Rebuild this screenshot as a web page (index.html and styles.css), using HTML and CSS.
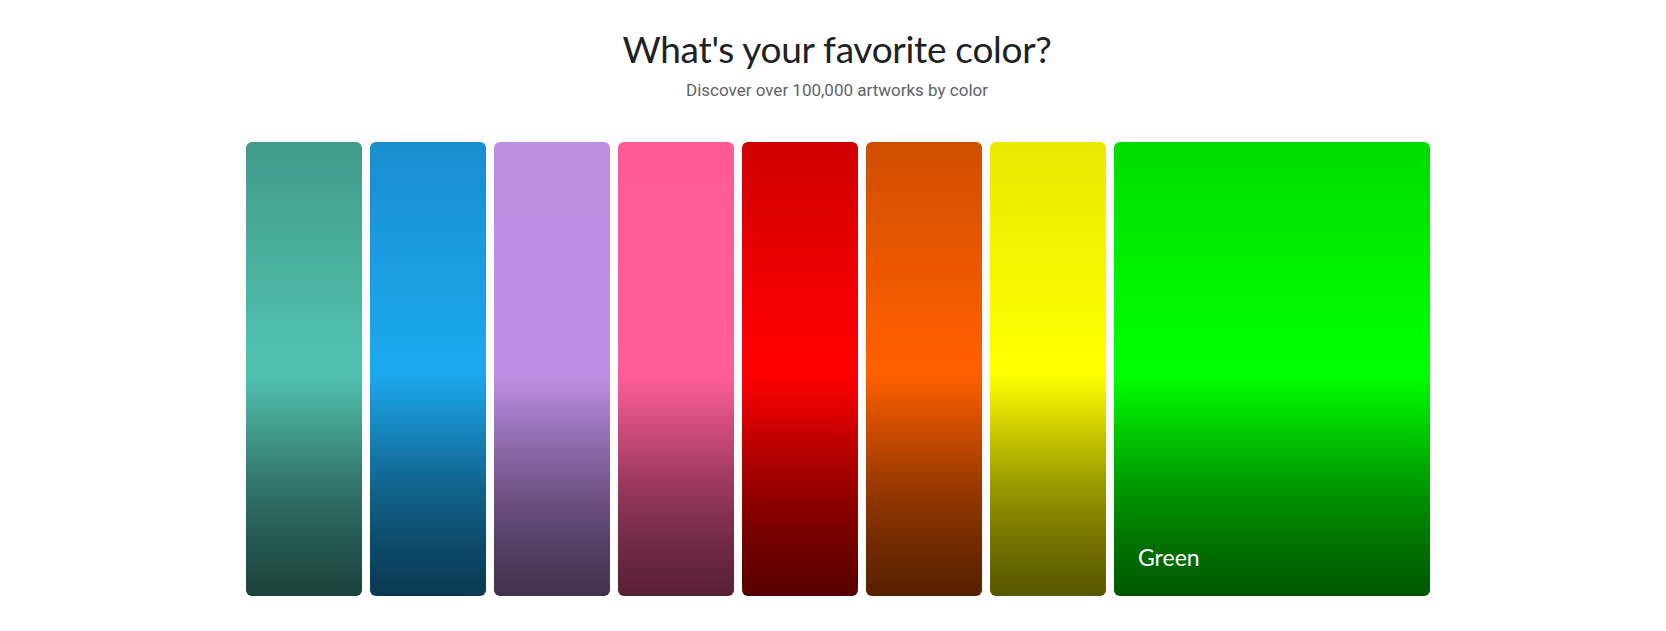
FILE: index.html
```html
<!DOCTYPE html>
<html lang="en">
<head>
<meta charset="utf-8">
<title>What's your favorite color?</title>
<link rel="stylesheet" href="styles.css">
</head>
<body>
<main class="page">
  <header class="intro">
    <h1 class="title">What's your favorite color?</h1>
    <p class="subtitle">Discover over 100,000 artworks by color</p>
  </header>
  <section class="swatches">
    <a class="swatch teal" href="#"></a>
    <a class="swatch blue" href="#"></a>
    <a class="swatch purple" href="#"></a>
    <a class="swatch pink" href="#"></a>
    <a class="swatch red" href="#"></a>
    <a class="swatch orange" href="#"></a>
    <a class="swatch yellow" href="#"></a>
    <a class="swatch green is-open" href="#"><span class="swatch-label">Green</span></a>
  </section>
</main>
</body>
</html>
```
FILE: styles.css
```css
* { box-sizing: border-box; }
html, body { margin: 0; padding: 0; background: #ffffff; }
body { font-family: Roboto, "Noto Sans", Arial, sans-serif; }

.page {
  display: flex;
  flex-direction: column;
}

.intro {
  display: flex;
  flex-direction: column;
  align-items: center;
  padding: 27px 0 0 8px;
}

.title {
  margin: 0;
  font-family: Lato, Roboto, sans-serif;
  font-weight: 400;
  font-size: 37px;
  line-height: 44px;
  color: #202124;
  letter-spacing: -0.3px;
}

.subtitle {
  margin: 7px 0 0;
  font-size: 17px;
  line-height: 24px;
  color: #5f6368;
}

.swatches {
  display: flex;
  gap: 8px;
  height: 454px;
  margin-top: 40px;
  padding: 0 236px 0 246px;
}

.swatch {
  flex: 0 0 116px;
  border-radius: 6px;
  display: flex;
  flex-direction: column;
  justify-content: flex-end;
  text-decoration: none;
  background:
    linear-gradient(to bottom,
      rgba(0,0,0,0) 51%,
      rgba(0,0,0,0.06) 55%,
      rgba(0,0,0,0.18) 62%,
      rgba(0,0,0,0.39) 75%,
      rgba(0,0,0,0.55) 88%,
      rgba(0,0,0,0.66) 100%),
    linear-gradient(to bottom, var(--top) 0%, var(--c) 48%, var(--c) 100%);
}

.swatch.is-open { flex: 0 0 316px; padding: 0 24px 25px; }

.swatch-label {
  color: #ffffff;
  font-family: Lato, Roboto, sans-serif;
  font-size: 23px;
  line-height: 28px;
}

.teal   { --top: #419a8a; --c: #52c2b0; }
.blue   { --top: #1a8ecf; --c: #1ca8ed; }
.purple { --top: #bc8fe3; --c: #bf8fe6; }
.pink   { --top: #ff5a94; --c: #ff5e98; }
.red    { --top: #cf0000; --c: #ff0000; }
.orange { --top: #cf4e00; --c: #ff5f00; }
.yellow { --top: #e9e800; --c: #ffff00; }
.green  { --top: #00dc00; --c: #00ff00; }
```
